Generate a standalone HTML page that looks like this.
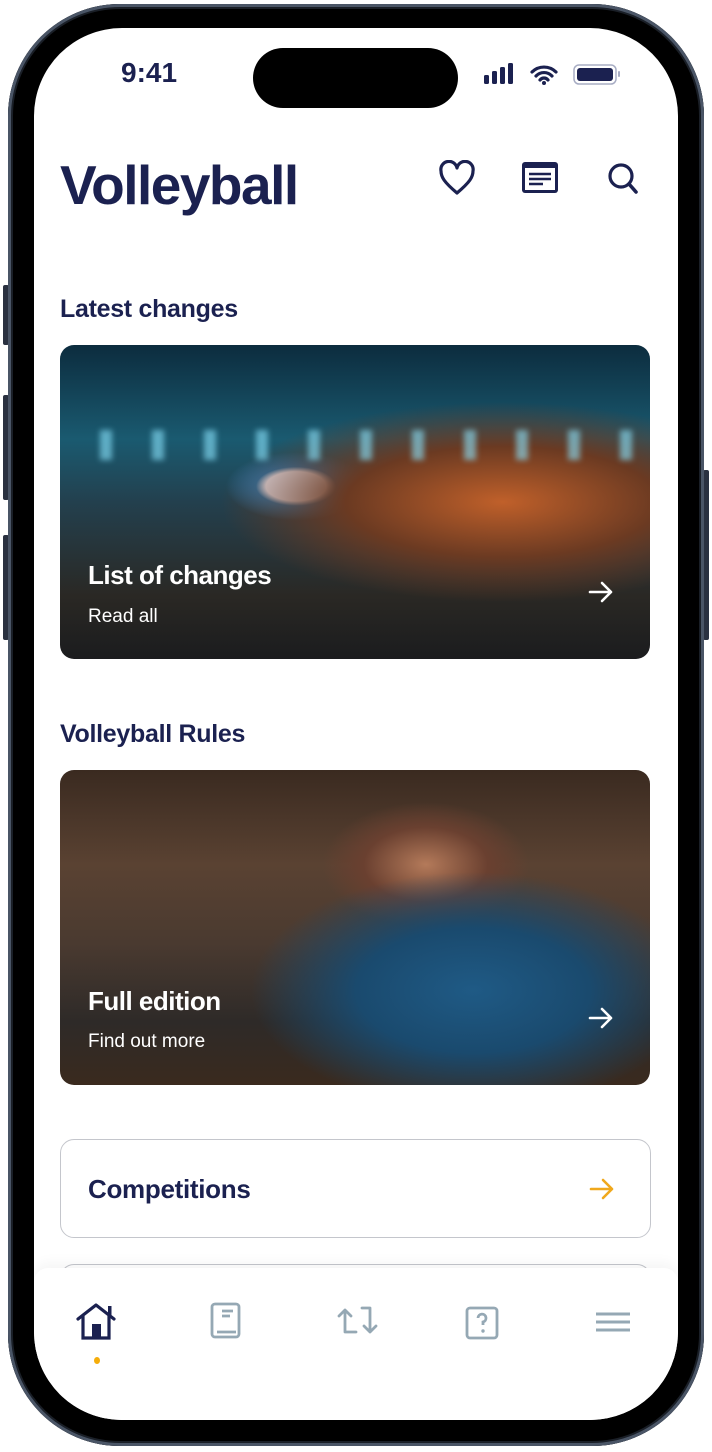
<!DOCTYPE html>
<html><head><meta charset="utf-8"><style>
*{margin:0;padding:0;box-sizing:border-box}
body{width:712px;height:1452px;background:#fff;position:relative;overflow:hidden;font-family:"Liberation Sans",sans-serif}
.abs{position:absolute}
.frame{left:8px;top:4px;width:696px;height:1442px;border-radius:112px;background:#000;box-shadow:inset 0 0 0 3px #4a5566,inset 0 0 0 5px #1a1f27}
.screen{left:34px;top:28px;width:644px;height:1392px;border-radius:88px;background:#fff;overflow:hidden}
.btn{background:#2a3140;border-radius:2px}
.navy{color:#1b2150}
.card{position:absolute;left:26px;width:590px;border-radius:14px;overflow:hidden}
.card .t{position:absolute;left:28px;color:#fff;font-weight:bold;font-size:26px;letter-spacing:-0.5px}
.card .s{position:absolute;left:28px;color:#fff;font-size:19px}
</style></head><body>
<div class="abs btn" style="left:3px;top:285px;width:6px;height:60px"></div>
<div class="abs btn" style="left:3px;top:395px;width:6px;height:105px"></div>
<div class="abs btn" style="left:3px;top:535px;width:6px;height:105px"></div>
<div class="abs btn" style="left:703px;top:470px;width:6px;height:170px"></div>
<div class="abs frame"></div>
<div class="abs screen">
  <div class="abs navy" style="left:87px;top:29px;font-size:28px;font-weight:bold">9:41</div>
  <div class="abs" style="left:219px;top:20px;width:205px;height:60px;border-radius:30px;background:#000"></div>
  <svg class="abs" style="left:450px;top:33px" width="140" height="26" viewBox="0 0 140 26">
    <rect x="0" y="14" width="5" height="9" rx="1.5" fill="#1b2150"/><rect x="8" y="10" width="5" height="13" rx="1.5" fill="#1b2150"/><rect x="16" y="6" width="5" height="17" rx="1.5" fill="#1b2150"/><rect x="24" y="2" width="5" height="21" rx="1.5" fill="#1b2150"/>
    <path d="M48 11a17 17 0 0 1 24 0M52 15a11 11 0 0 1 16 0M56 19a5 5 0 0 1 8 0" stroke="#1b2150" stroke-width="3.2" fill="none" stroke-linecap="round"/><circle cx="60" cy="22" r="2" fill="#1b2150"/>
    <rect x="90" y="4" width="42" height="19" rx="5" fill="none" stroke="#a8adc4" stroke-width="1.5"/><rect x="93" y="7" width="36" height="13" rx="3" fill="#1b2150"/><rect x="134" y="10" width="2" height="6" rx="1" fill="#a8adc4"/>
  </svg>
  <div class="abs navy" style="left:26px;top:125px;font-size:55px;font-weight:bold;letter-spacing:-1.5px">Volleyball</div>
  <svg class="abs" style="left:405px;top:132px" width="200" height="40" viewBox="0 0 200 40">
    <path d="M18 33 C5 22 2 17 2 11 A8 8 0 0 1 18 8 A8 8 0 0 1 34 11 C34 17 31 22 18 33Z" fill="none" stroke="#1b2150" stroke-width="3.2" stroke-linejoin="round"/>
    <rect x="83" y="2" width="36" height="31" rx="3" fill="#1b2150"/><rect x="86" y="8" width="30" height="22" fill="#fff"/><path d="M90 14h22M90 19h22M90 24h14" stroke="#1b2150" stroke-width="2.5"/>
    <circle cx="182" cy="16" r="11" fill="none" stroke="#1b2150" stroke-width="3.2"/><path d="M190 24l7 8" stroke="#1b2150" stroke-width="3.6" stroke-linecap="round"/>
  </svg>
  <div class="abs navy" style="left:26px;top:267px;font-size:25px;font-weight:bold;letter-spacing:-0.3px">Latest changes</div>
  <div class="card" style="top:317px;height:314px;background:radial-gradient(ellipse at 75% 50%,#c0602a 0%,#6b3a22 25%,transparent 45%),radial-gradient(ellipse at 40% 45%,#e8e6f0 0 6%,#2a6fa0 8%,transparent 14%),linear-gradient(180deg,#0c2c3e 0%,#1a5a70 30%,#23404e 50%,#2a2824 80%,#1b1c1e 100%)">
    <div class="abs" style="left:0;right:0;top:85px;height:30px;background:repeating-linear-gradient(90deg,transparent 0 40px,rgba(140,230,255,.6) 40px 52px);filter:blur(3px)"></div>
    <div class="t" style="top:215px">List of changes</div>
    <div class="s" style="top:261px">Read all</div>
    <svg class="abs" style="left:528px;top:236px" width="26" height="22" viewBox="0 0 26 22"><path d="M2 11h21M14 2l9 9-9 9" stroke="#fff" stroke-width="2.6" fill="none" stroke-linecap="round" stroke-linejoin="round"/></svg>
  </div>
  <div class="abs navy" style="left:26px;top:692px;font-size:25px;font-weight:bold;letter-spacing:-0.3px">Volleyball Rules</div>
  <div class="card" style="top:742px;height:315px;background:radial-gradient(ellipse at 70% 70%,#1f5a85 0%,#1a4a6e 20%,transparent 38%),radial-gradient(ellipse at 62% 30%,#b47a5a 0%,#6a4030 12%,transparent 20%),linear-gradient(180deg,#3a2a20 0%,#5a4232 30%,#4a3a30 55%,#2e2a28 80%,#3a2a1e 100%)">
    <div class="t" style="top:216px">Full edition</div>
    <div class="s" style="top:261px">Find out more</div>
    <svg class="abs" style="left:528px;top:237px" width="26" height="22" viewBox="0 0 26 22"><path d="M2 11h21M14 2l9 9-9 9" stroke="#fff" stroke-width="2.6" fill="none" stroke-linecap="round" stroke-linejoin="round"/></svg>
  </div>
  <div class="abs" style="left:26px;top:1111px;width:591px;height:99px;border:1.5px solid #c4c6cc;border-radius:14px"></div>
  <div class="abs navy" style="left:54px;top:1146px;font-size:26px;font-weight:bold;letter-spacing:-0.3px">Competitions</div>
  <svg class="abs" style="left:555px;top:1150px" width="26" height="22" viewBox="0 0 26 22"><path d="M2 11h21M14 2l9 9-9 9" stroke="#f0a81c" stroke-width="2.6" fill="none" stroke-linecap="round" stroke-linejoin="round"/></svg>
  <div class="abs" style="left:26px;top:1236px;width:591px;height:40px;border:1.5px solid #c4c6cc;border-radius:14px"></div>
  <div class="abs" style="left:0;top:1240px;width:644px;height:160px;background:#fff;border-radius:14px 14px 0 0;box-shadow:0 -6px 12px rgba(0,0,0,.04)"></div>
  <svg class="abs" style="left:40px;top:1274px" width="570" height="40" viewBox="0 0 570 40">
    <path d="M4 17L22 3l18 14" stroke="#1b2150" stroke-width="3.2" fill="none" stroke-linecap="round" stroke-linejoin="round"/>
    <path d="M9 14v22h26V14" stroke="#1b2150" stroke-width="3.2" fill="none"/><rect x="18" y="22" width="9" height="14" fill="#1b2150"/><rect x="34" y="4" width="3.5" height="9" fill="#1b2150"/>
    <g stroke="#95a8b4" stroke-width="2.8" fill="none"><rect x="138" y="2" width="27" height="33" rx="3"/><path d="M143 30h19M148 9h11M148 14h8"/>
    <path d="M265 14l6-6 6 6M271 9v21h11M288 6h8v24M290 24l6 6 6-6" stroke-linecap="round" stroke-linejoin="round"/>
    <rect x="393" y="6" width="30" height="30" rx="3"/><path d="M404 16a4 4 0 1 1 5 4v3" /></g>
    <circle cx="409" cy="29" r="1.7" fill="#95a8b4"/>
    <path d="M522 12h34M522 20h34M522 28h34" stroke="#95a8b4" stroke-width="3"/>
  </svg>
  <div class="abs" style="left:60px;top:1329px;width:6px;height:7px;border-radius:50%;background:#f5ad0a"></div>
</div>
</body></html>
